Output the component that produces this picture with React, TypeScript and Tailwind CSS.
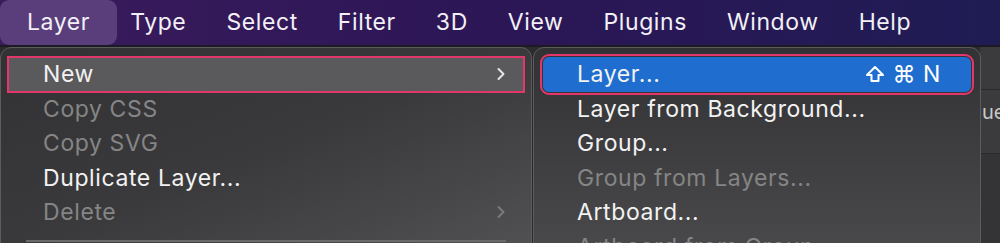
import React from "react";

const font = { fontFamily: "Inter, 'Noto Sans', sans-serif" };

function Chevron({ dim }: { dim?: boolean }) {
  return (
    <svg width="10" height="14" viewBox="0 0 10 14" className={dim ? "text-[#7a7a7a]" : "text-[#e6e6e6]"}>
      <path d="M2.5 2 L7.5 7 L2.5 12" fill="none" stroke="currentColor" strokeWidth="2" strokeLinecap="round" strokeLinejoin="round" />
    </svg>
  );
}

function ShiftIcon() {
  return (
    <svg width="20" height="18" viewBox="0 0 20 18">
      <path d="M10 2 L18 10 L13.5 10 L13.5 16 L6.5 16 L6.5 10 L2 10 Z" fill="none" stroke="#ffffff" strokeWidth="2" strokeLinejoin="round" />
    </svg>
  );
}

export default function App() {
  const menus = ["Layer", "Type", "Select", "Filter", "3D", "View", "Plugins", "Window", "Help"];
  const left = [
    { t: "New", on: true, sub: true, sel: true },
    { t: "Copy CSS", on: false },
    { t: "Copy SVG", on: false },
    { t: "Duplicate Layer...", on: true },
    { t: "Delete", on: false, sub: true },
  ];
  const right = [
    { t: "Layer...", on: true, sel: true },
    { t: "Layer from Background...", on: true },
    { t: "Group...", on: true },
    { t: "Group from Layers...", on: false },
    { t: "Artboard...", on: true },
    { t: "Artboard from Group...", on: false },
  ];
  return (
    <div className="relative w-[1000px] h-[243px] overflow-hidden bg-[#2b2a2e]" style={font}>
      <div className="h-[45px] flex items-center bg-gradient-to-r from-[#3a1b5c] via-[#2c1656] to-[#1f1c54] text-[23px] tracking-[0.6px] text-[#f2f0f6]">
        {menus.map((m, i) => (
          <div
            key={m}
            className={
              i === 0
                ? "h-[45px] flex items-center pl-[27px] pr-[27px] rounded-[9px] bg-[#5a3e7b] mr-[13px]"
                : "mr-[40px]"
            }
          >
            {m}
          </div>
        ))}
      </div>
      <div className="h-[2px] bg-[#1c1a22]" />
      <div className="flex justify-end">
        <div className="w-[20px] flex flex-col bg-[#3b3b3d]">
          <div className="h-[43px] border-b border-[#2a2a2a]" />
          <div className="h-[64px] border-b border-[#2a2a2a] text-[20px] leading-[24px] text-[#c8c8c8] pt-[10px] pl-[2px] whitespace-nowrap overflow-hidden">ue</div>
          <div className="h-[90px] bg-[#343436]" />
        </div>
      </div>

      <div className="absolute left-0 top-[47px] w-[532px] h-[210px] rounded-t-[11px] border border-[#5c5c5e] bg-gradient-to-br from-[#323234] via-[#3a3a3c] to-[#525254] pt-[9px] px-[7px]">
        {left.map((it) => (
          <div
            key={it.t}
            className={
              "h-[34.5px] flex items-center justify-between pl-[35px] pr-[18px] text-[23px] tracking-[0.6px] " +
              (it.sel ? "bg-[#5a5a5c] outline outline-2 outline-[#e3366b] -outline-offset-1 " : "") +
              (it.on ? "text-[#f2f2f2]" : "text-[#858585]")
            }
          >
            <span>{it.t}</span>
            {it.sub && <Chevron dim={!it.on} />}
          </div>
        ))}
        <div className="mt-[10px] mx-[18px] h-[2px] bg-[#6a6a6c]" />
      </div>

      <div className="absolute left-[533px] top-[47px] w-[448px] h-[210px] rounded-t-[11px] border border-[#5c5c5e] bg-gradient-to-b from-[#323234] to-[#4a4a4c] pt-[9px] px-[9px]">
        {right.map((it) => (
          <div
            key={it.t}
            className={
              "h-[34.5px] flex items-center justify-between pl-[34px] pr-[30px] text-[23px] tracking-[0.6px] whitespace-nowrap " +
              (it.sel ? "bg-[#1f6ecf] rounded-[6px] outline outline-2 outline-[#e3366b] outline-offset-1 " : "") +
              (it.on ? "text-[#f2f2f2]" : "text-[#858585]")
            }
          >
            <span>{it.t}</span>
            {it.sel && (
              <span className="flex items-center gap-[7px] text-white">
                <ShiftIcon />
                <span>⌘</span>
                <span>N</span>
              </span>
            )}
          </div>
        ))}
      </div>
    </div>
  );
}
